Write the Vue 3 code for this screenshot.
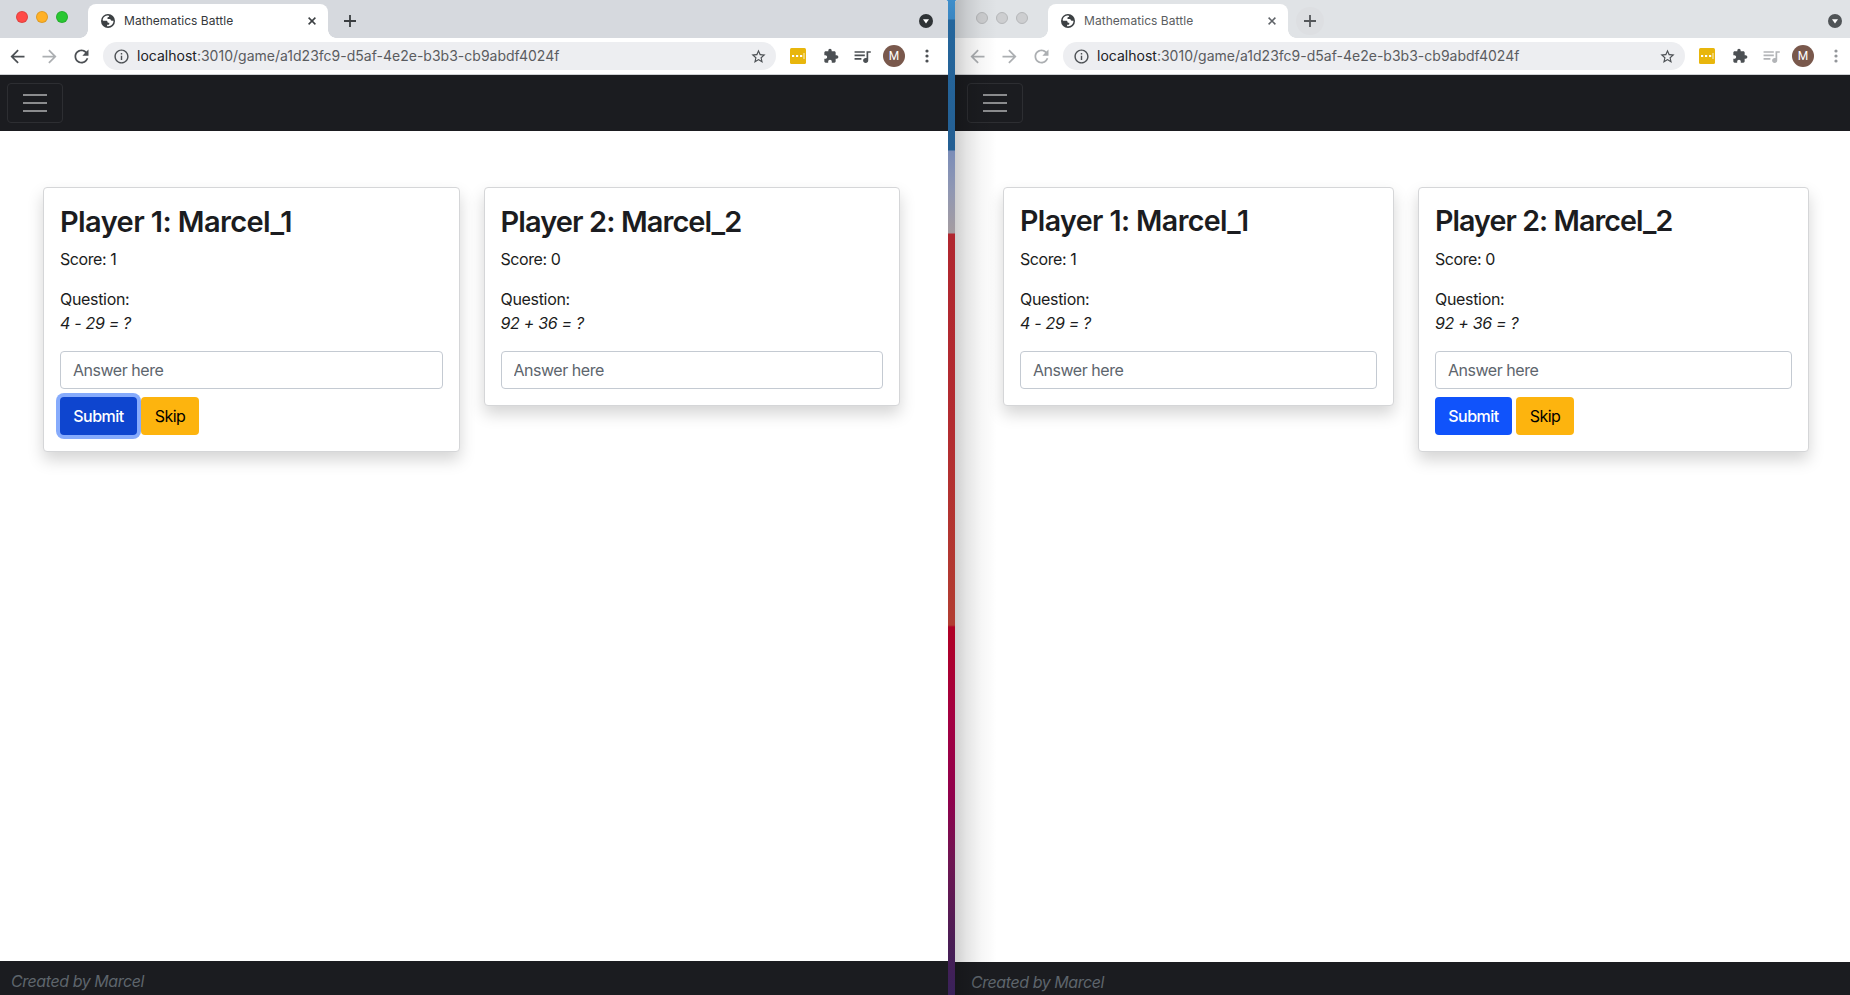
<script setup>
const url = { host: 'localhost', rest: ':3010/game/a1d23fc9-d5af-4e2e-b3b3-cb9abdf4024f' }

const windows = [
  {
    id: 'left',
    active: true,
    players: [
      { n: 1, name: 'Marcel_1', score: 1, question: '4 - 29 = ?', controls: true, focused: true },
      { n: 2, name: 'Marcel_2', score: 0, question: '92 + 36 = ?', controls: false },
    ],
  },
  {
    id: 'right',
    active: false,
    players: [
      { n: 1, name: 'Marcel_1', score: 1, question: '4 - 29 = ?', controls: false },
      { n: 2, name: 'Marcel_2', score: 0, question: '92 + 36 = ?', controls: true },
    ],
  },
]
</script>

<template>
  <div class="desktop">
    <section v-for="w in windows" :key="w.id" class="window" :class="[w.id, { inactive: !w.active }]">
      <div class="tabstrip">
        <div class="lights"><i class="red"></i><i class="amber"></i><i class="green"></i></div>
        <div class="tab">
          <svg class="globe" viewBox="0 0 14 14">
            <circle cx="7" cy="7" r="7" fill="#3c4043" />
            <path d="M7.6 1.6C5 1.2 2.6 2.6 1.8 5.2c-.3 1 .1 1.6 1 1.6h2.4c.9 0 1.2.4 1.3 1.1.1.6.5.9 1.2.9h.6v1.1c0 .5-.3.8-.8.8H6.2l-.2 1.5c2.8.6 5.5-.9 6.3-3.7L12.5 6.7h-1.7c-.7 0-1-.3-1.1-.9-.1-.6-.4-.8-1-.8H6.5V3.9c0-.5.3-.8.8-.8h.9z" fill="#fff" />
          </svg>
          <span class="tab-title">Mathematics Battle</span>
          <svg class="close" viewBox="0 0 8 8"><path d="M.6.6l6.8 6.8M7.4.6L.6 7.4" /></svg>
        </div>
        <div class="newtab">
          <svg viewBox="0 0 12 12"><path d="M6 0v12M0 6h12" /></svg>
        </div>
        <svg class="tabsearch" viewBox="0 0 14 14">
          <circle cx="7" cy="7" r="7" />
          <path d="M4 5.3h6L7 9.5z" fill="#fff" />
        </svg>
      </div>

      <div class="toolbar">
        <div class="nav-icons">
          <svg class="strong" viewBox="0 0 24 24"><path d="M20 11H7.83l5.59-5.59L12 4l-8 8 8 8 1.41-1.41L7.83 13H20v-2z" /></svg>
          <svg class="weak" viewBox="0 0 24 24"><path d="M12 4l-1.41 1.41L16.17 11H4v2h12.17l-5.58 5.59L12 20l8-8z" /></svg>
          <svg class="strong" viewBox="0 0 24 24"><path d="M17.65 6.35C16.2 4.9 14.21 4 12 4c-4.42 0-7.99 3.58-7.99 8s3.57 8 7.99 8c3.73 0 6.84-2.55 7.73-6h-2.08c-.82 2.33-3.04 4-5.65 4-3.31 0-6-2.69-6-6s2.69-6 6-6c1.66 0 3.14.69 4.22 1.78L13 11h7V4l-2.35 2.35z" /></svg>
        </div>
        <div class="omnibox">
          <svg class="info" viewBox="0 0 24 24"><path d="M11 7h2v2h-2zm0 4h2v6h-2zm1-9C6.48 2 2 6.48 2 12s4.48 10 10 10 10-4.48 10-10S17.52 2 12 2zm0 18c-4.41 0-8-3.59-8-8s3.59-8 8-8 8 3.59 8 8-3.59 8-8 8z" /></svg>
          <span class="url"><b>{{ url.host }}</b>{{ url.rest }}</span>
          <svg class="star" viewBox="0 0 24 24"><path d="M22 9.24l-7.19-.62L12 2 9.19 8.63 2 9.24l5.46 4.73L5.82 21 12 17.27 18.18 21l-1.63-7.03L22 9.24zM12 15.4l-3.76 2.27 1-4.28-3.32-2.88 4.38-.38L12 6.1l1.71 4.04 4.38.38-3.32 2.88 1 4.28L12 15.4z" /></svg>
        </div>
        <svg class="ext" viewBox="0 0 16 16">
          <rect width="16" height="16" rx="1.5" fill="#e8b60c" />
          <path d="M2 7h2.2v2H2zM6 7h2.2v2H6zM10 7h2.2v2H10zM13.6 5h.8v6h-.8z" fill="#fff" />
        </svg>
        <svg class="puzzle" viewBox="0 0 24 24"><path d="M20.5 11H19V7c0-1.1-.9-2-2-2h-4V3.5C13 2.12 11.88 1 10.5 1S8 2.12 8 3.5V5H4c-1.1 0-1.99.9-1.99 2v3.8H3.5c1.49 0 2.7 1.21 2.7 2.7s-1.21 2.7-2.7 2.7H2V20c0 1.1.9 2 2 2h3.8v-1.5c0-1.49 1.21-2.7 2.7-2.7 1.49 0 2.7 1.21 2.7 2.7V22H17c1.1 0 2-.9 2-2v-4h1.5c1.38 0 2.5-1.12 2.5-2.5S21.88 11 20.5 11z" /></svg>
        <svg class="music" viewBox="0 0 24 24"><path d="M15 6H3v2h12V6zm0 4H3v2h12v-2zM3 16h8v-2H3v2zM17 6v8.18c-.31-.11-.65-.18-1-.18-1.66 0-3 1.34-3 3s1.34 3 3 3 3-1.34 3-3V8h3V6h-5z" /></svg>
        <span class="avatar">M</span>
        <svg class="dots" viewBox="0 0 4 14"><circle cx="2" cy="2" r="1.6" /><circle cx="2" cy="7" r="1.6" /><circle cx="2" cy="12" r="1.6" /></svg>
      </div>

      <nav class="navbar">
        <button class="toggler"><i></i><i></i><i></i></button>
      </nav>

      <main class="board">
        <article v-for="p in w.players" :key="p.n" class="card">
          <h2>Player {{ p.n }}: {{ p.name }}</h2>
          <p class="score">Score: {{ p.score }}</p>
          <p>Question:<br /><em>{{ p.question }}</em></p>
          <input type="text" placeholder="Answer here" />
          <div v-if="p.controls" class="actions">
            <button class="btn submit" :class="{ focused: p.focused }">Submit</button>
            <button class="btn skip">Skip</button>
          </div>
        </article>
      </main>

      <footer class="footer"><em>Created by Marcel</em></footer>
    </section>
  </div>
</template>

<style>
body {
  margin: 0;
  overflow: hidden;
}
</style>

<style scoped>
* {
  box-sizing: border-box;
}
.desktop {
  display: flex;
  gap: 7px;
  width: 1850px;
  height: 995px;
  overflow: hidden;
  font-family: Inter, "Liberation Sans", sans-serif;
  background: linear-gradient(
    to bottom,
    #3f8eca 0, #3a86c2 19px, #25669c 20px, #245f93 150px,
    #7b8db8 151px, #8f97b3 190px, #a59ca0 233px,
    #b0262f 234px, #b32b30 420px, #b23d31 625px,
    #b00024 627px, #a30042 720px, #8f004c 800px, #6f1552 860px, #4b1d55 940px, #39225a 995px
  );
}
.window {
  position: relative;
  flex: none;
  display: flex;
  flex-direction: column;
  height: 995px;
  overflow: hidden;
  background: #fff;
}
.window.left {
  width: 953px;
  margin-left: -5px;
  border-radius: 0 3px 0 0;
}
.window.right {
  width: 902px;
  border-radius: 3px 0 0 0;
}
/* Shade thrown by the front window onto the one behind it */
.window.right::after {
  content: "";
  position: absolute;
  inset: 0 auto 0 0;
  width: 42px;
  background: linear-gradient(to right, rgba(0, 0, 0, 0.19), rgba(0, 0, 0, 0.1) 28%, rgba(0, 0, 0, 0.035) 62%, transparent);
  pointer-events: none;
}

/* Tab strip */
.tabstrip {
  display: flex;
  align-items: center;
  height: 38px;
  padding: 4px 15px 0 19px;
  background: #d6d9de;
}
.inactive .tabstrip {
  background: #e0e3e6;
}
.lights {
  display: flex;
  gap: 8px;
  width: 74px;
  margin-top: -8px;
}
.inactive .lights {
  margin-top: -7px;
}
.lights i {
  width: 12px;
  height: 12px;
  border-radius: 50%;
  border: 1px solid rgba(0, 0, 0, 0.12);
}
.lights i:first-child {
  margin-left: 2px;
}
.red { background: #ff4a47; }
.amber { background: #ffb126; }
.green { background: #29c732; }
.inactive .lights i {
  background: #cdced0;
  border-color: #b5b7b9;
}
.tab {
  position: relative;
  display: flex;
  align-items: center;
  width: 240px;
  height: 34px;
  padding: 0 12px 0 13px;
  border-radius: 8px 8px 0 0;
  background: #fff;
}
.tab::before,
.tab::after {
  content: "";
  position: absolute;
  bottom: 0;
  width: 8px;
  height: 8px;
}
.tab::before {
  left: -8px;
  background: radial-gradient(circle at 0 0, transparent 7.5px, #fff 8px);
}
.tab::after {
  right: -8px;
  background: radial-gradient(circle at 100% 0, transparent 7.5px, #fff 8px);
}
.globe {
  width: 14px;
  height: 14px;
  margin-right: 9px;
}
.tab-title {
  font-size: 12px;
  line-height: 16px;
  color: #35383b;
  letter-spacing: 0.05px;
  white-space: nowrap;
}
.inactive .tab-title {
  color: #5a5d60;
}
.close {
  width: 8px;
  height: 8px;
  margin-left: auto;
  stroke: #3c4043;
  stroke-width: 1.5;
}
.inactive .close {
  stroke: #5f6368;
}
.newtab {
  display: flex;
  align-items: center;
  justify-content: center;
  width: 28px;
  height: 28px;
  margin-left: 8px;
  border-radius: 50%;
}
.newtab svg {
  width: 12px;
  height: 12px;
  stroke: #3a3d40;
  stroke-width: 1.8;
}
.inactive .newtab {
  background: #dddfe2;
}
.inactive .newtab svg {
  stroke: #54575a;
}
.tabsearch {
  width: 14px;
  height: 14px;
  margin-left: auto;
  fill: #2f3336;
}
.inactive .tabsearch {
  fill: #505457;
}

/* Toolbar */
.toolbar {
  display: flex;
  align-items: center;
  height: 37px;
  padding-left: 11.5px;
  border-bottom: 1px solid #cfd1d4;
  background: #fff;
}
.toolbar svg {
  flex: none;
  fill: #4c5054;
}
.nav-icons {
  display: flex;
  gap: 11px;
  width: 96.5px;
}
.nav-icons svg {
  width: 21px;
  height: 21px;
}
.nav-icons .weak,
.inactive .nav-icons svg {
  fill: #acafb2;
}
.inactive .toolbar .music {
  fill: #b2b4b7;
}
.inactive .toolbar .dots {
  fill: #93969a;
}
.omnibox {
  flex: none;
  display: flex;
  align-items: center;
  width: 673px;
  height: 28px;
  padding: 0 9.5px 0 9.5px;
  border-radius: 14px;
  background: #edeef1;
}
.right .omnibox {
  width: 622px;
}
.omnibox .info {
  width: 17px;
  height: 17px;
  margin-right: 7.5px;
}
.url {
  font-size: 14px;
  line-height: 20px;
  color: #5a5c5f;
  letter-spacing: 0.01px;
  white-space: nowrap;
}
.url b {
  font-weight: 400;
  color: #202124;
}
.omnibox .star {
  width: 17px;
  height: 17px;
  margin-left: auto;
}
.ext {
  width: 16px;
  height: 16px;
  margin-left: 14px;
}
.puzzle {
  width: 16px;
  height: 16px;
  margin-left: 16.5px;
}
.music {
  width: 20.5px;
  height: 20.5px;
  margin-left: 13px;
}
.avatar {
  display: flex;
  align-items: center;
  justify-content: center;
  width: 22px;
  height: 22px;
  margin-left: 11px;
  border-radius: 50%;
  background: #79584c;
  color: #fff;
  font: 400 12px/22px Roboto, sans-serif;
}
.dots {
  width: 4px;
  height: 14px;
  margin-left: 19.5px;
}

/* Page */
.navbar {
  display: flex;
  align-items: center;
  height: 56px;
  padding-left: 12px;
  background: #1b1c20;
}
.toggler {
  display: flex;
  flex-direction: column;
  align-items: center;
  justify-content: center;
  gap: 6px;
  width: 56px;
  height: 40px;
  padding: 0;
  border: 1px solid #2d2e32;
  border-radius: 4px;
  background: none;
}
.toggler i {
  width: 24px;
  height: 2px;
  background: #8b8c8e;
}
.board {
  flex: 1;
  display: grid;
  grid-template-columns: 1fr 1fr;
  align-items: start;
  gap: 24px;
  padding: 56px 48px 0;
}
.card {
  padding: 16px;
  border: 1px solid #d5d6d8;
  border-radius: 4px;
  background: #fff;
  box-shadow: 0 8px 16px rgba(0, 0, 0, 0.17);
  color: #1b1c20;
  font-size: 16px;
  line-height: 24px;
}
h2 {
  margin: 0 0 8px;
  font-size: 29px;
  line-height: 35px;
  font-weight: 600;
  letter-spacing: -0.92px;
  white-space: nowrap;
}
.card:first-child h2 {
  letter-spacing: -0.6px;
}
.right h2 {
  font-size: 28.6px;
  line-height: 34px;
  margin-bottom: 9px;
}
p {
  margin: 0 0 16px;
  letter-spacing: -0.32px;
}
.score {
  letter-spacing: -0.42px;
}
input {
  display: block;
  width: 100%;
  height: 38px;
  padding: 6px 12px;
  border: 1px solid #c4cad2;
  border-radius: 4px;
  background: #fff;
  font: inherit;
  letter-spacing: -0.47px;
}
input::placeholder {
  color: #5d656d;
  opacity: 1;
}
.actions {
  display: flex;
  gap: 4px;
  margin-top: 8px;
}
.btn {
  height: 38px;
  padding: 0;
  border: 0;
  border-radius: 4px;
  font: inherit;
  font-weight: 500;
  letter-spacing: -0.5px;
}
.submit {
  width: 77px;
  background: #1053fb;
  color: #fff;
}
.submit.focused {
  background: #0e45cf;
  box-shadow: 0 0 0 4px #86abfc;
}
.skip {
  position: relative;
  width: 58px;
  background: #fdb40e;
  color: #000;
  font-weight: 400;
}
.footer {
  flex: none;
  height: 34px;
  padding: 8px 16px 0;
  background: #1b1c20;
  color: #5e656c;
  font-size: 16px;
  line-height: 24px;
  letter-spacing: -0.43px;
}
.right .footer {
  height: 33px;
}
</style>
